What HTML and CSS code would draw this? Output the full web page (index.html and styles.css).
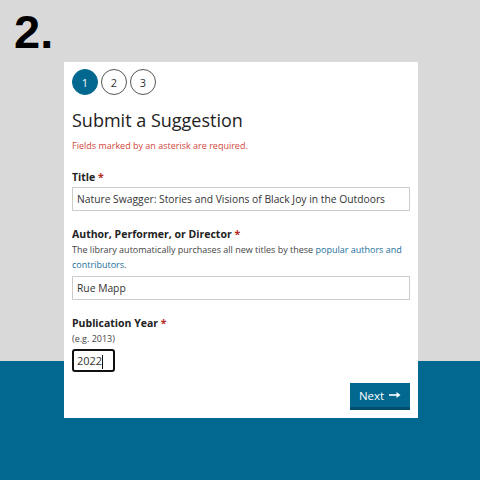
FILE: index.html
```html
<!DOCTYPE html>
<html lang="en">
<head>
    <meta charset="UTF-8">
    <meta name="viewport" content="width=device-width, initial-scale=1.0">
    <title>Submit a Suggestion</title>
    <link rel="stylesheet" href="styles.css">
</head>
<body>

    <h1 class="step-num">2.</h1>

    <div class="card">
        <div class="steps">
            <span class="step active">1</span>
            <span class="step">2</span>
            <span class="step">3</span>
        </div>

        <h2>Submit a Suggestion</h2>
        <p class="required-note">Fields marked by an asterisk are required.</p>

        <label class="first">Title <span class="star">*</span></label>
        <input type="text" class="field" value="Nature Swagger: Stories and Visions of Black Joy in the Outdoors">

        <label>Author, Performer, or Director <span class="star">*</span></label>
        <p class="help">The library automatically purchases all new titles by these <a href="#">popular authors and</a><br><a href="#">contributors</a>.</p>
        <input type="text" class="field" value="Rue Mapp">

        <label>Publication Year <span class="star">*</span></label>
        <p class="help">(e.g. 2013)</p>
        <div class="year">2022<span class="caret"></span></div>

        <div class="actions">
            <button class="next-btn">Next
                <svg width="12" height="8" viewBox="0 0 12 8"><path d="M0 4h9" stroke="#fff" stroke-width="1.6"/><path d="M7.5 1l4 3-4 3z" fill="#fff"/></svg>
            </button>
        </div>
    </div>

</body>
</html>
```

FILE: styles.css
```css
body {
    margin: 0;
    height: 480px;
    font-family: 'Open Sans', 'Noto Sans', sans-serif;
    background: linear-gradient(to bottom, #d9d9d9 361px, #02688f 361px);
    overflow: hidden;
}
.step-num {
    margin: 0;
    height: 62px;
    padding-left: 14px;
    font-family: 'Liberation Sans', Arial, sans-serif;
    font-size: 47px;
    font-weight: bold;
    line-height: 64px;
    color: #000;
}
.card {
    width: 338px;
    margin-left: 64px;
    padding: 7px 8px 8px;
    background: white;
}
.steps {
    display: flex;
    gap: 3px;
}
.step {
    width: 24px;
    height: 24px;
    border: 1px solid #555;
    border-radius: 50%;
    display: flex;
    align-items: center;
    justify-content: center;
    font-size: 11px;
    color: #333;
}
.step.active {
    background: #02688f;
    border-color: #02688f;
    color: white;
}
h2 {
    margin: 12px 0 0;
    font-size: 18px;
    font-weight: normal;
    color: #222;
    line-height: 26px;
}
.required-note {
    margin: 6px 0 0;
    font-size: 9px;
    line-height: 13px;
    color: #d2463c;
}
label {
    display: block;
    margin-top: 15px;
    font-size: 10.5px;
    line-height: 16px;
    font-weight: bold;
    color: #222;
}
label.first {
    margin-top: 17px;
}
.star {
    color: #b22a22;
}
.field {
    display: block;
    box-sizing: border-box;
    width: 100%;
    height: 24px;
    margin-top: 2px;
    padding: 0 4px;
    border: 1px solid #ccc;
    font-family: inherit;
    font-size: 10.3px;
    color: #333;
}
.help {
    margin: 0;
    font-size: 9px;
    line-height: 15px;
    color: #444;
}
.help + .field {
    margin-top: 4px;
}
.help a {
    color: #1a6f9a;
    text-decoration: none;
}
.year {
    box-sizing: border-box;
    width: 43px;
    height: 23px;
    margin-top: 3px;
    padding: 0 3px;
    border: 2px solid #111;
    border-radius: 3px;
    font-size: 11px;
    line-height: 19px;
    color: #333;
}
.caret {
    display: inline-block;
    width: 1px;
    height: 14px;
    background: #111;
    vertical-align: middle;
}
.actions {
    display: flex;
    justify-content: flex-end;
    margin-top: 11px;
}
.next-btn {
    display: flex;
    align-items: center;
    justify-content: center;
    gap: 5px;
    width: 60px;
    height: 27px;
    padding: 0;
    border: none;
    border-bottom: 3px solid #024e6c;
    background: #02688f;
    color: white;
    font-family: inherit;
    font-size: 11.5px;
}
```
